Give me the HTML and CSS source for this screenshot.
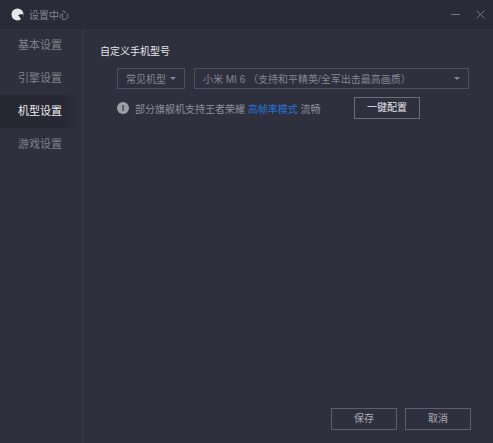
FILE: index.html
```html
<!DOCTYPE html>
<html>
  <head>
    <meta charset="utf-8" />
    <title>设置中心</title>

    <link rel="stylesheet" href="styles.css">
  </head>

  <body>
    <div class="window">
      <div class="title-bar">
        <svg class="logo" width="13" height="13" viewBox="0 0 13 13">
          <circle cx="6.500" cy="6.500" r="6" fill="#e8e8ea" />
          <path d="M7 7.500c1.500-1.500 3.500-1.500 5.500-1 0 2-.8 4-2.500 5.200-.5-1.700-1.500-3.200-3-4.200z" fill="#2a2b38" />
        </svg>
        <span class="title">设置中心</span>
        <div class="window-btns">
          <svg width="9" height="9" viewBox="0 0 9 9"><path d="M0 4.500h9" stroke="#77787f" fill="none" /></svg>
          <svg width="9" height="9" viewBox="0 0 9 9"><path d="M.5.500l8 8M8.500.500l-8 8" stroke="#77787f" fill="none" /></svg>
        </div>
      </div>

      <div class="body">
        <ul class="side-menu">
          <li>基本设置</li>
          <li>引擎设置</li>
          <li class="active">机型设置</li>
          <li>游戏设置</li>
        </ul>

        <div class="content">
          <div class="section-title">自定义手机型号</div>

          <div class="select-row">
            <div class="select select-type">
              <span>常见机型</span>
              <i class="arrow"></i>
            </div>
            <div class="select select-model">
              <span>小米 MI 6 （支持和平精英/全军出击最高画质）</span>
              <i class="arrow"></i>
            </div>
          </div>

          <div class="tip-row">
            <span class="tip-icon">!</span>
            <span class="tip-text">部分旗舰机支持王者荣耀 <a class="link">高帧率模式</a> 流畅</span>
            <div class="btn btn-config">一键配置</div>
          </div>

          <div class="footer">
            <div class="btn">保存</div>
            <div class="btn">取消</div>
          </div>
        </div>
      </div>
    </div>
  </body>
</html>
```

FILE: styles.css
```css
* {
  margin: 0;
  padding: 0;
  box-sizing: border-box;
}
ul li {
  list-style: none;
}
body {
  width: 493px;
  height: 443px;
  overflow: hidden;
  background: #2f303e;
  font-family: "Liberation Sans", "Noto Sans CJK SC", sans-serif;
  font-size: 10px;
  color: #8e8f98;
}
.window {
  display: flex;
  flex-direction: column;
  height: 100%;
}
.title-bar {
  display: flex;
  align-items: center;
  flex-shrink: 0;
  height: 29px;
  padding: 0 8px 0 11px;
  background: #2a2b38;
}
.logo {
  margin-right: 5px;
}
.title {
  font-size: 10px;
  color: #84858d;
}
.window-btns {
  display: flex;
  gap: 16px;
  margin-left: auto;
}
.body {
  display: flex;
  flex: 1;
}
.side-menu {
  width: 83px;
  flex-shrink: 0;
  background: #2f303e;
  border-right: 1px solid #3b3c4a;
}
.side-menu li {
  height: 33px;
  line-height: 33px;
  padding-left: 18px;
  font-size: 11px;
  color: #7f8089;
}
.side-menu .active {
  background: linear-gradient(to right, #272833 75%, #2f303e);
  color: #ececee;
}
.content {
  flex: 1;
  display: flex;
  flex-direction: column;
  padding: 16px 22px 13px 17px;
}
.section-title {
  height: 14px;
  line-height: 14px;
  font-size: 10px;
  color: #e6e6e9;
}
.select-row {
  display: flex;
  gap: 9px;
  margin: 9px 0 0 17px;
}
.select {
  display: flex;
  align-items: center;
  justify-content: space-between;
  height: 21px;
  padding: 0 8px;
  border: 1px solid #4e4f5c;
  font-size: 10px;
  color: #85868f;
}
.select-type {
  width: 68px;
}
.select-model {
  width: 275px;
}
.arrow {
  width: 0;
  height: 0;
  border-left: 3px solid transparent;
  border-right: 3px solid transparent;
  border-top: 3px solid #85868f;
}
.tip-row {
  display: flex;
  align-items: center;
  height: 22px;
  margin: 8px 0 0 17px;
}
.tip-icon {
  width: 12px;
  height: 12px;
  margin-right: 6px;
  border-radius: 50%;
  background: #9c9da5;
  color: #2f303e;
  font-size: 9px;
  font-weight: 700;
  line-height: 12px;
  text-align: center;
}
.tip-text {
  width: 219px;
  font-size: 10px;
  white-space: nowrap;
}
.link {
  color: #2373d6;
}
.btn {
  width: 66px;
  height: 22px;
  line-height: 20px;
  border: 1px solid #5d5e6a;
  text-align: center;
  font-size: 10px;
  color: #a9aab1;
}
.btn-config {
  border-color: #6b6c77;
  color: #e4e4e7;
}
.footer {
  display: flex;
  justify-content: flex-end;
  gap: 8px;
  margin-top: auto;
}
```
